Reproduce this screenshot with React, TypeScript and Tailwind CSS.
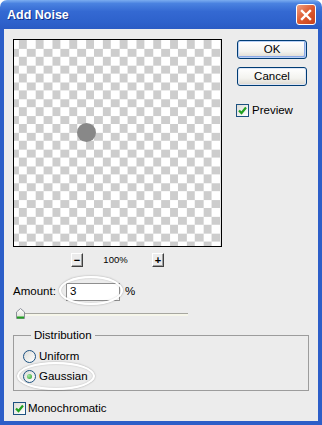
import React from "react";

function Check({ checked }: { checked?: boolean }) {
  return (
    <div className="w-[13px] h-[13px] shrink-0 border border-[#1c5180] bg-[linear-gradient(135deg,#dcdcd7,#ffffff)] flex items-center justify-center">
      {checked && (
        <svg width="11" height="11" viewBox="0 0 11 11">
          <polyline points="2,5.5 4.5,8 9,2.5" fill="none" stroke="#21a121" strokeWidth="2.2" />
        </svg>
      )}
    </div>
  );
}

function Radio({ checked }: { checked?: boolean }) {
  return (
    <div className="w-[13px] h-[13px] shrink-0 rounded-full border border-[#1c5180] bg-[linear-gradient(135deg,#dcdcd7,#ffffff)] flex items-center justify-center">
      {checked && (
        <div className="w-[5px] h-[5px] rounded-full bg-[radial-gradient(circle_at_35%_35%,#a6e6a6,#21a121)]" />
      )}
    </div>
  );
}

function XpButton({ label, def }: { label: string; def?: boolean }) {
  return (
    <div
      className={
        "w-[70px] h-[19px] rounded-[3px] border border-[#003c74] bg-[linear-gradient(#ffffff,#f3f3ef_60%,#dcd8cf)] flex items-center justify-center " +
        (def ? "shadow-[inset_0_0_0_1px_#b8d0f5,inset_-1px_-1px_0_1px_#8aa8e6]" : "shadow-[inset_0_0_0_1px_#dde6f6]")
      }
    >
      <span className="leading-none">{label}</span>
    </div>
  );
}

function SmallBtn({ label }: { label: string }) {
  return (
    <div className="w-[12px] h-[14px] border-t border-l border-white border-r border-b border-r-[#404040] border-b-[#404040] bg-[#ececec] shadow-[inset_-1px_-1px_0_#a0a0a0] flex items-center justify-center text-[11px] leading-none font-bold">
      {label}
    </div>
  );
}

export default function App() {
  return (
    <div className="w-[322px] h-[425px] flex flex-col font-['Liberation_Sans',Arial,sans-serif] text-[11.5px] text-black bg-white">
      {/* title bar */}
      <div className="h-[29px] shrink-0 rounded-t-[7px] bg-[linear-gradient(#7badf0_0%,#4a82e0_12%,#3469d2_40%,#2e62cc_75%,#2a5bc4_100%)] flex items-center pl-[7px] pr-[6px]">
        <span className="font-bold text-[12.5px] text-white [text-shadow:1px_1px_0_#10308a] pt-[1px]">Add Noise</span>
        <div className="ml-auto w-[20px] h-[21px] rounded-[3px] border border-white bg-[linear-gradient(135deg,#f0a083,#dd5a30_50%,#c8411b)] flex items-center justify-center">
          <svg width="12" height="12" viewBox="0 0 12 12">
            <path d="M2 2 L10 10 M10 2 L2 10" stroke="white" strokeWidth="2.4" strokeLinecap="square" />
          </svg>
        </div>
      </div>

      {/* body */}
      <div className="flex-1 relative border-x-4 border-b-4 border-[#2c5ec8] bg-[#ececec] flex flex-col pl-[9px]">
        {/* top section */}
        <div className="flex pt-[10px]">
          <div className="flex flex-col">
            <div className="w-[209px] h-[208px] border border-black relative bg-[conic-gradient(#cdcdcd_25%,#ffffff_0_50%,#cdcdcd_0_75%,#ffffff_0)] bg-[length:16.8px_16.8px] bg-[position:-4px_0px] overflow-hidden">
              <div className="absolute left-[63px] top-[83px] w-[19px] h-[19px] rounded-full bg-[radial-gradient(circle,#888888_60%,#8c8c8c_85%,#a9a9a9_100%)]" />
            </div>
            <div className="flex items-center mt-[6px] pl-[58px]">
              <SmallBtn label="−" />
              <span className="ml-[20px] w-[25px] text-[9.5px] leading-none text-center">100%</span>
              <div className="ml-[24px]">
                <SmallBtn label="+" />
              </div>
            </div>
          </div>
          <div className="flex flex-col ml-[15px] pt-[1px]">
            <XpButton label="OK" def />
            <div className="mt-[8px]">
              <XpButton label="Cancel" />
            </div>
            <div className="flex items-center mt-[16px] -ml-[1px]">
              <Check checked />
              <span className="ml-[3px]">Preview</span>
            </div>
          </div>
        </div>

        {/* amount */}
        <div className="flex items-center mt-[16px] h-[18px]">
          <span className="w-[53px]">Amount:</span>
          <div className="w-[54px] h-[18px] border border-[#8f8f8f] bg-white flex items-center pl-[3px]">3</div>
          <span className="ml-[5px]">%</span>
        </div>

        {/* slider */}
        <div className="relative mt-[7px] w-[172px] h-[11px] ml-[3px]">
          <div className="absolute left-[4px] right-0 top-[5px] h-[3px] border-t border-[#a7a7a0] bg-[#f6f6ea]" />
          <svg className="absolute left-0 top-0" width="9" height="11" viewBox="0 0 9 11">
            <defs>
              <linearGradient id="th" x1="0" y1="0" x2="0" y2="1">
                <stop offset="0" stopColor="#ffffff" />
                <stop offset="1" stopColor="#dcdcd4" />
              </linearGradient>
            </defs>
            <path d="M4.5 0.5 L8.5 4 L8.5 10.5 L0.5 10.5 L0.5 4 Z" fill="url(#th)" stroke="#8a8f98" />
            <line x1="1" y1="9.5" x2="8" y2="9.5" stroke="#21a121" strokeWidth="2" />
          </svg>
        </div>

        {/* distribution group */}
        <div className="relative mt-[16px] w-[296px] h-[56px] border border-[#9c9c9c] pl-[9px] pt-[14px] flex flex-col">
          <span className="absolute left-[17px] -top-[8px] px-[3px] bg-[#ececec] leading-[14px]">Distribution</span>
          <div className="flex items-center">
            <Radio />
            <span className="ml-[3px] leading-[13px]">Uniform</span>
          </div>
          <div className="flex items-center mt-[7px]">
            <Radio checked />
            <span className="ml-[3px] leading-[13px]">Gaussian</span>
          </div>
        </div>

        {/* monochromatic */}
        <div className="flex items-center mt-[9px]">
          <Check checked />
          <span className="ml-[2px]">Monochromatic</span>
        </div>

        {/* highlight ellipses */}
        <div className="absolute left-[55px] top-[247px] w-[64px] h-[29px] rounded-[50%] border-2 border-white shadow-[0_0_2px_rgba(0,0,0,0.35),inset_0_0_2px_rgba(0,0,0,0.2)] pointer-events-none" />
        <div className="absolute left-[13px] top-[333px] w-[78px] h-[28px] rounded-[50%] border-2 border-white shadow-[0_0_2px_rgba(0,0,0,0.35),inset_0_0_2px_rgba(0,0,0,0.2)] pointer-events-none" />
      </div>
    </div>
  );
}
